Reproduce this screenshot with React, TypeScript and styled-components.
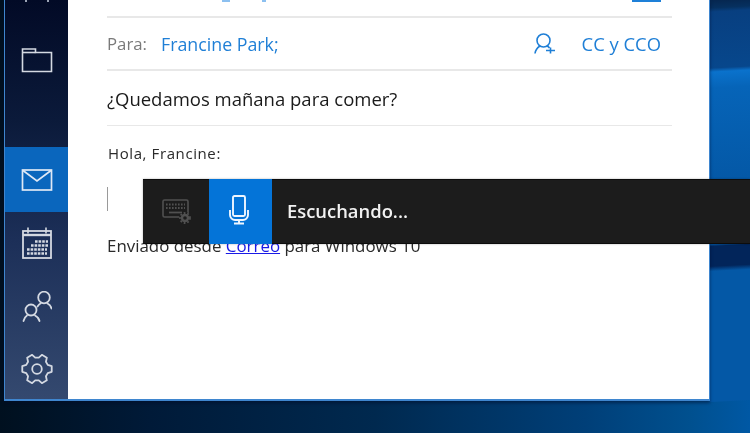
import styled, { createGlobalStyle } from 'styled-components';

const GlobalStyle = createGlobalStyle`
  html, body {
    margin: 0;
    padding: 0;
    height: 100%;
  }
  body {
    font-family: 'Open Sans', 'Noto Sans', 'Liberation Sans', sans-serif;
    overflow: hidden;
  }
`;

const Desktop = styled.div`
  position: relative;
  width: 750px;
  height: 433px;
  overflow: hidden;
  display: flex;
  align-items: flex-start;
  padding-left: 4px;
  box-sizing: border-box;
  background:
    linear-gradient(177deg, #06264f 0, #06305f 8px, #083f80 12px, #07478c 68px, #0a72cc 72px, #0664b8 88px, #0458a6 180px, #0458a6 244px, #02255a 246px, #02255a 266px, #0458a6 271px, #0458a6 401px, transparent 402px) right top / 40px 100% no-repeat,
    linear-gradient(90deg, #00101f 0%, #001a38 20%, #00294f 50%, #003f78 78%, #00508f 92%, #0058a4 100%);
`;

const Window = styled.div`
  width: 706px;
  height: 401px;
  display: flex;
  box-sizing: border-box;
  border: solid #3f86cf;
  border-width: 0 1px 2px 1px;
  box-shadow: 0 2px 3px rgba(0, 10, 40, 0.5);
`;

const Sidebar = styled.nav`
  width: 63px;
  flex: none;
  display: flex;
  flex-direction: column;
  background: linear-gradient(180deg, #020a26 0%, #0b1a3a 30%, #1c2f58 60%, #34496f 100%);
`;

const TopDots = styled.div`
  height: 25px;
  display: flex;
  justify-content: center;
  gap: 20px;

  > i {
    width: 2px;
    height: 2px;
    background: #9aa3b5;
  }
`;

const NavItem = styled.div<{ $active?: boolean; $height: number }>`
  height: ${(p) => p.$height}px;
  display: flex;
  align-items: center;
  justify-content: center;
  background: ${(p) => (p.$active ? '#0a66bd' : 'transparent')};
  color: ${(p) => (p.$active ? '#dfe8f5' : '#d4d9e2')};

  > svg {
    filter: blur(0.35px);
  }
`;

const Main = styled.main`
  flex: 1;
  background: #fff;
  padding: 0 37px 0 39px;
  min-width: 0;
  filter: blur(0.3px);
`;

const TopRow = styled.div`
  height: 16px;
  border-bottom: 2px solid #e8e8e8;
  display: flex;
`;

const CutMark = styled.span<{ $left: number; $width: number }>`
  width: ${(p) => p.$width}px;
  height: 2px;
  margin-left: ${(p) => p.$left}px;
  background: #8cc0f0;
`;

const CutButton = styled.span`
  width: 29px;
  height: 2px;
  margin: 0 11px 0 auto;
  background: #1e80d8;
`;

const ToRow = styled.div`
  height: 51px;
  display: flex;
  align-items: center;
  border-bottom: 2px solid #e8e8e8;
  font-size: 18.4px;
`;

const ToLabel = styled.span`
  color: #7a7a7a;
  font-size: 16.8px;
  margin-right: 14px;
`;

const Recipient = styled.span`
  color: #1f7fd6;
  flex: 1;
  font-size: 17.8px;
`;

const CcLink = styled.span`
  color: #1f7fd6;
  margin: 0 11px 0 26px;
`;

const Subject = styled.div`
  height: 54px;
  display: flex;
  align-items: center;
  border-bottom: 1px solid #e8e8e8;
  font-size: 18.5px;
  color: #1a1a1a;
`;

const Body = styled.div`
  font-size: 16.9px;
  color: #2a2a2a;
  padding-top: 18px;
`;

const Greeting = styled.div`
  margin-left: 1px;
  line-height: 19px;
  font-size: 15px;
  letter-spacing: 0.6px;
`;

const Caret = styled.div`
  width: 1px;
  height: 24px;
  margin-top: 24px;
  background: #9a9a9a;
`;

const Signature = styled.div`
  margin-top: 25px;
  line-height: 19px;
`;

const SignatureLink = styled.a`
  color: #1a1ae6;
  text-decoration: underline;
`;

const DictationBar = styled.div`
  position: absolute;
  left: 143px;
  right: 0;
  top: 179px;
  height: 65px;
  display: flex;
  box-sizing: border-box;
  background: #1c1c1c;
  border-top: 1px solid #0c0c0c;
  border-bottom: 1px solid #0c0c0c;
  box-shadow: 0 0 2px rgba(0, 0, 0, 0.3);
`;

const KeyboardSlot = styled.div`
  width: 66px;
  display: flex;
  align-items: center;
  justify-content: center;
  padding-left: 2px;
  box-sizing: border-box;
  color: #505050;

  > svg {
    filter: blur(0.4px);
  }
`;

const MicSlot = styled.div`
  width: 63px;
  margin: -1px 0;
  display: flex;
  align-items: center;
  justify-content: center;
  padding: 0 4px 4px 0;
  box-sizing: border-box;
  background: #0474d8;
  color: #eef6ff;

  > svg {
    filter: blur(0.35px);
  }
`;

const Status = styled.div`
  margin-left: 15px;
  display: flex;
  align-items: center;
  padding-bottom: 2px;
  color: #f2f2f2;
  font-size: 18.4px;
  font-weight: 600;
  filter: blur(0.3px);
`;

const FolderIcon = () => (
  <svg width="32" height="26" viewBox="0 0 32 26" fill="none" stroke="currentColor" strokeWidth="1.6">
    <path d="M1.5 24.5V2h13v3.5h16v19z" />
    <path d="M1.5 5.5h13" />
  </svg>
);

const MailIcon = () => (
  <svg width="32" height="22" viewBox="0 0 32 22" fill="none" stroke="currentColor" strokeWidth="1.7">
    <rect x="1.5" y="1" width="29" height="20" />
    <path d="M2 1.500L16 12 30 1.500" />
  </svg>
);

const CalendarIcon = () => (
  <svg width="32" height="32" viewBox="0 0 32 32" fill="none" stroke="currentColor">
    <rect x="2" y="4" width="28" height="27" strokeWidth="1.8" />
    <path d="M2 8h28" strokeWidth="2.4" />
    <path d="M7 0.500v6M25 0.500v6" strokeWidth="1.6" />
    <path d="M6 26.500h20M6 22.500h20M10 18.500h17M14 14.500h13" strokeWidth="2.6" strokeDasharray="2.6 1" />
  </svg>
);

const PeopleIcon = () => (
  <svg width="30" height="32" viewBox="0 0 30 32" fill="none" stroke="currentColor" strokeWidth="1.8" strokeLinecap="round">
    <circle cx="22" cy="6.500" r="5.800" />
    <path d="M25.500 12.500C27.500 13.500 29 15.500 29.500 17.500M18.500 12.500C17.500 13 16.500 14 15.500 15.500" />
    <circle cx="9" cy="19" r="5.500" />
    <path d="M1.500 30C2 27.500 3.500 25.500 5 24.500M13 24.500C15 25.500 17 27.500 17.500 30" />
  </svg>
);

// six teeth, one pointing left and one right, like the settings cog in the reference
const gearPath = (() => {
  const pts: string[] = [];
  for (let i = 0; i < 6; i++) {
    const a = i * 60;
    [[11.5, -21], [15, -11], [15, 11], [11.5, 21]].forEach(([r, d]) => {
      const t = ((a + d) * Math.PI) / 180;
      pts.push(`${(16 + r * Math.cos(t)).toFixed(2)} ${(15 + r * Math.sin(t)).toFixed(2)}`);
    });
  }
  return `M${pts.join('L')}Z`;
})();

const GearIcon = () => (
  <svg width="32" height="30" viewBox="0 0 32 30" fill="none" stroke="currentColor" strokeWidth="1.8" strokeLinejoin="round">
    <path d={gearPath} />
    <circle cx="16" cy="15" r="4.800" />
  </svg>
);

const AddPersonIcon = () => (
  <svg width="22" height="22" viewBox="0 0 22 22" fill="none" stroke="#1f7fd6" strokeWidth="1.6">
    <circle cx="9.500" cy="7.500" r="6.500" />
    <path d="M1 20.500C1.500 17 3.500 14.500 6 13M13 13C14 13.500 15 14.200 15.500 15" />
    <path d="M12 17.500h9M16.500 14.500v6" />
  </svg>
);

const KeyboardIcon = () => (
  <svg width="30" height="26" viewBox="0 0 30 26" fill="none" stroke="currentColor">
    <rect x="1" y="1" width="25" height="17" rx="1.500" strokeWidth="1.600" />
    <path d="M4 5.500h19M4 9h19" strokeWidth="1.800" strokeDasharray="1.600 1.400" />
    <path d="M7 13.500h13" strokeWidth="1.800" />
    <circle cx="23" cy="19" r="6" fill="#1c1c1c" stroke="none" />
    <circle cx="23" cy="19" r="3" strokeWidth="2.400" />
    <circle cx="23" cy="19" r="5" strokeWidth="1.800" strokeDasharray="1.800 1.800" />
  </svg>
);

const MicIcon = () => (
  <svg width="20" height="30" viewBox="0 0 20 30" fill="none" stroke="currentColor" strokeWidth="1.900">
    <rect x="4" y="1" width="12" height="20" rx="1.500" />
    <path d="M1 15v5c0 3 2.500 5 5 5h8c2.500 0 5-2 5-5v-5" />
    <path d="M10 25v3M5 28.500h10" />
  </svg>
);

export default function App() {
  return (
    <>
      <GlobalStyle />
      <Desktop>
        <Window>
          <Sidebar>
            <TopDots>
              <i />
              <i />
            </TopDots>
            <NavItem $height={70}>
              <FolderIcon />
            </NavItem>
            <NavItem $height={52} />
            <NavItem $active $height={65}>
              <MailIcon />
            </NavItem>
            <NavItem $height={62}>
              <CalendarIcon />
            </NavItem>
            <NavItem $height={65}>
              <PeopleIcon />
            </NavItem>
            <NavItem $height={60}>
              <GearIcon />
            </NavItem>
          </Sidebar>
          <Main>
            <TopRow>
              <CutMark $left={115} $width={8} />
              <CutMark $left={32} $width={4} />
              <CutButton />
            </TopRow>
            <ToRow>
              <ToLabel>Para:</ToLabel>
              <Recipient>Francine Park;</Recipient>
              <AddPersonIcon />
              <CcLink>CC y CCO</CcLink>
            </ToRow>
            <Subject>¿Quedamos mañana para comer?</Subject>
            <Body>
              <Greeting>Hola, Francine:</Greeting>
              <Caret />
              <Signature>
                Enviado desde <SignatureLink>Correo</SignatureLink> para Windows 10
              </Signature>
            </Body>
          </Main>
        </Window>
        <DictationBar>
          <KeyboardSlot>
            <KeyboardIcon />
          </KeyboardSlot>
          <MicSlot>
            <MicIcon />
          </MicSlot>
          <Status>Escuchando...</Status>
        </DictationBar>
      </Desktop>
    </>
  );
}
